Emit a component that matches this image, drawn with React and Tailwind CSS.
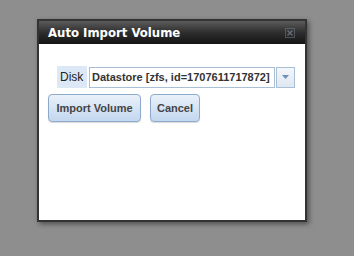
const F = { fontFamily: "'DejaVu Sans Condensed', 'DejaVu Sans', sans-serif" };
const L = { fontFamily: "'Liberation Sans', Arial, sans-serif" };
export default function App() {
  return (
    <div className="w-[354px] h-[256px] bg-[#8e8e8e] relative overflow-hidden" style={L}>
      <div className="absolute left-[37px] top-[19px] w-[270px] h-[203px] border-2 border-[#333] bg-white shadow-[2px_2px_5px_rgba(0,0,0,0.45)] flex flex-col">
        <div className="h-[24px] bg-gradient-to-b from-[#5c5c5c] via-[#2e2e2e] to-[#141414] flex items-center justify-between pl-[9px] pr-[10px] border-b border-white">
          <span className="text-white font-bold text-[13px] leading-none" style={F}>Auto Import Volume</span>
          <svg width="10" height="10" viewBox="0 0 10 10" className="opacity-60">
            <rect x="0.5" y="0.5" width="9" height="9" fill="none" stroke="#6a7584" strokeWidth="1" />
            <path d="M2.5 2.5 L7.5 7.5 M7.5 2.5 L2.5 7.5" stroke="#8a96a6" strokeWidth="1.5" />
          </svg>
        </div>
        <div className="flex flex-col pl-[9px] pt-[21px]">
          <div className="flex items-center pl-[9px]">
            <div className="h-[22px] w-[30px] bg-[#dce8f5] flex items-center pl-[3px] text-[12px] text-[#222]" style={L}>Disk</div>
            <div className="ml-[2px] h-[21px] w-[186px] border border-[#a9bfd6] flex items-center pl-[2px] text-[11px] font-bold text-[#333] whitespace-nowrap overflow-hidden" style={L}>Datastore [zfs, id=1707611717872]</div>
            <div className="ml-[1px] h-[21px] w-[19px] border border-[#a9bfd6] bg-gradient-to-b from-[#f4f7fb] to-[#dfe7f0] flex items-center justify-center">
              <svg width="7" height="4" viewBox="0 0 7 4"><path d="M0 0 H7 L3.5 4 Z" fill="#6f8fb5" /></svg>
            </div>
          </div>
          <div className="flex gap-[9px] mt-[6px]">
            <button className="h-[28px] w-[93px] rounded-[4px] border border-[#8eaacb] bg-gradient-to-b from-[#eaf1fa] to-[#c3d7ee] text-[11px] font-bold text-[#444] shadow-[0_1px_1px_rgba(0,0,0,0.15)]" style={L}>Import Volume</button>
            <button className="h-[28px] w-[50px] rounded-[4px] border border-[#8eaacb] bg-gradient-to-b from-[#eaf1fa] to-[#c3d7ee] text-[11px] font-bold text-[#444] shadow-[0_1px_1px_rgba(0,0,0,0.15)]" style={L}>Cancel</button>
          </div>
        </div>
      </div>
    </div>
  );
}
